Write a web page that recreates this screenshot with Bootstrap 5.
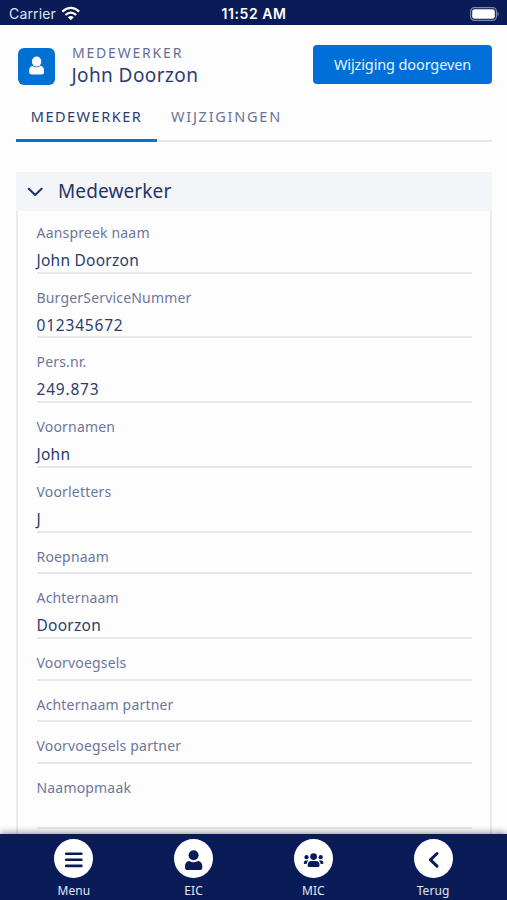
<!DOCTYPE html>
<html lang="nl">
<head>
<meta charset="utf-8">
<meta name="viewport" content="width=device-width, initial-scale=1">
<title>Medewerker</title>
<link href="https://cdn.jsdelivr.net/npm/bootstrap@5.3.0/dist/css/bootstrap.min.css" rel="stylesheet">
<style>
body{font-family:"Noto Sans",sans-serif;background:#fdfdfe;color:#2b3d6e;height:900px;overflow:hidden}
.screen{height:900px}
.statusbar{height:25px;background:#0a1c57;color:#fff;font-family:Inter,sans-serif;font-size:14px;line-height:25px;padding:2px 8px 0 9px}
.statusbar .side{flex:1 1 0}
.carrier{letter-spacing:.15px;color:#dfe4f2}
.clock{font-weight:600;font-size:14px;letter-spacing:.55px}
.record{height:72px;padding:18px 15px 0 18px}
.avatar{width:37px;height:37px;border-radius:6px;background:#0070d2;margin-top:5px}
.record-text{margin-left:17px}
.record-type{font-size:14px;line-height:20px;letter-spacing:1.8px;color:#666f98}
.record-name{font-size:19px;line-height:24px;letter-spacing:.4px;margin-left:-.5px}
.btn-change,.btn-change:hover{width:179px;height:39px;border-radius:4px;background:#0070d8;color:#e8f3ff;font-size:14.5px;padding:0;margin-top:2px;letter-spacing:-.12px}
.tabs{margin:0 15px 0 16px;height:45px;border-bottom:2px solid #e6e9ea}
.tabs .nav-link{height:45px;padding:0 0 6px;border-bottom:3px solid transparent;border-radius:0;font-size:14.5px;line-height:38px;letter-spacing:1.75px;color:#6b7397}
.tabs .nav-link.active{color:#2b3d6e;border-color:#1170c8;width:141px;letter-spacing:1.5px}
.tabs .tab-second{margin-left:14px}
.section-head{margin:30px 15px 0 16px;height:39px;background:#f4f5f9;color:#1f3566;font-size:19px;letter-spacing:.12px;padding-left:11px}
.section-title{margin-left:15px}
.fields{margin:0 15px 0 16px;border:solid #e8eaed;border-width:0 2px;padding:0 18px 0 18.5px;min-height:0}
.field{height:64.75px;padding-top:14.2px;border-bottom:2px solid #e5e7eb;flex:none}
.field:first-child{height:62.5px;padding-top:12px}
.field.blank{height:41.65px}
.field dt{font-weight:400;font-size:14px;line-height:20px;letter-spacing:.18px;color:#6d769c}
.field dd{margin:0;font-size:15.5px;line-height:22px;padding-top:6px;letter-spacing:.25px}
.field dd.digits{letter-spacing:.8px}
.dock{height:66px;background:#0a1c57;color:#e2e7f3;box-shadow:0 -1px 7px rgba(0,0,0,.45);padding:5px 14px 0;position:relative}
.dock a{width:119.75px;color:inherit;font-size:12px;line-height:16px;letter-spacing:.1px}
.disc{width:39px;height:39px;background:#fff;margin-bottom:5px}
</style>
</head>
<body>
<div class="screen d-flex flex-column">
  <div class="statusbar d-flex align-items-center flex-shrink-0">
    <div class="side d-flex align-items-center"><span class="carrier">Carrier</span>
      <svg class="ms-1" width="20" height="15" viewBox="0 0 20 15" fill="none" stroke="#fff" stroke-width="2.3"><path d="M2.3 5.7Q11-1.9 19.1 5.7M5.4 9Q10.8 4.2 16.2 9"/><path d="M10.8 14.2 7.8 11.2Q10.8 8.8 13.8 11.2Z" fill="#fff" stroke="none"/></svg>
    </div>
    <span class="clock">11:52 AM</span>
    <div class="side d-flex justify-content-end align-items-center">
      <svg width="29" height="14" viewBox="0 0 29 14"><rect x=".6" y=".6" width="25.8" height="12.8" rx="3.8" fill="none" stroke="#7f88ad" stroke-width="1.2"/><rect x="2.2" y="2.2" width="22.6" height="9.6" rx="2.4" fill="#fff"/><path d="M27.5 4.6Q30 7 27.5 9.4Z" fill="#7f88ad"/></svg>
    </div>
  </div>
  <header class="record d-flex align-items-start flex-shrink-0">
    <div class="avatar d-flex justify-content-center">
      <svg width="37" height="37" viewBox="0 0 37 37" fill="#fff"><ellipse cx="18.6" cy="13.6" rx="4.7" ry="5"/><path d="M14.3 17.8Q18.6 20.8 22.9 17.8Q26 19 26 22.5V24Q26 26.5 23.5 26.5H13.6Q11.2 26.5 11.2 24V22.5Q11.2 19 14.3 17.8Z"/></svg>
    </div>
    <div class="record-text flex-grow-1"><div class="record-type">MEDEWERKER</div><div class="record-name">John Doorzon</div></div>
    <button class="btn btn-change" type="button">Wijziging doorgeven</button>
  </header>
  <nav class="tabs nav flex-shrink-0">
    <a class="nav-link active text-center" href="#">MEDEWERKER</a>
    <a class="nav-link tab-second" href="#">WIJZIGINGEN</a>
  </nav>
  <div class="section-head d-flex align-items-center flex-shrink-0">
    <svg width="16" height="10" viewBox="0 0 16 10" fill="none" stroke="#1f3566" stroke-width="2.1" stroke-linecap="round" stroke-linejoin="round"><path d="M1.8 1.8 8.2 8 14.6 1.8"/></svg>
    <span class="section-title">Medewerker</span>
  </div>
  <dl class="fields d-flex flex-column flex-grow-1 overflow-hidden">
    <div class="field"><dt>Aanspreek naam</dt><dd>John Doorzon</dd></div>
    <div class="field"><dt>BurgerServiceNummer</dt><dd class="digits">012345672</dd></div>
    <div class="field"><dt>Pers.nr.</dt><dd class="digits">249.873</dd></div>
    <div class="field"><dt>Voornamen</dt><dd>John</dd></div>
    <div class="field"><dt>Voorletters</dt><dd>J</dd></div>
    <div class="field blank"><dt>Roepnaam</dt></div>
    <div class="field"><dt>Achternaam</dt><dd>Doorzon</dd></div>
    <div class="field blank"><dt>Voorvoegsels</dt></div>
    <div class="field blank"><dt>Achternaam partner</dt></div>
    <div class="field blank"><dt>Voorvoegsels partner</dt></div>
    <div class="field"><dt>Naamopmaak</dt></div>
  </dl>
  <nav class="dock d-flex flex-shrink-0">
    <a class="d-flex flex-column align-items-center text-decoration-none" href="#"><span class="disc rounded-circle"><svg width="39" height="39" viewBox="0 0 39 39" stroke="#0a1c57" stroke-width="2.6" stroke-linecap="round"><path d="M12.2 14.7H27.4M12.2 20.7H27.4M12.2 26.9H27.4"/></svg></span>Menu</a>
    <a class="d-flex flex-column align-items-center text-decoration-none" href="#"><span class="disc rounded-circle"><svg width="39" height="39" viewBox="0 0 39 39" fill="#0a1c57"><circle cx="19.6" cy="16.2" r="5"/><path d="M15.2 22.1Q19.6 24.6 24 22.1Q28.3 22.8 28.3 27.3V29Q28.3 31 26.3 31H13Q11 31 11 29V27.3Q11 22.8 15.2 22.1Z"/></svg></span>EIC</a>
    <a class="d-flex flex-column align-items-center text-decoration-none" href="#"><span class="disc rounded-circle"><svg width="39" height="39" viewBox="0 0 39 39" fill="#0a1c57"><circle cx="19.6" cy="17.6" r="3.4"/><circle cx="12.5" cy="18.2" r="2.1"/><circle cx="26.7" cy="18.2" r="2.1"/><path d="M16.8 22.1H22.4Q25.5 22.7 25.5 26V26.5Q25.5 28 24 28H15.2Q13.7 28 13.7 26.5V26Q13.7 22.7 16.8 22.1ZM11.3 21.5H14.4Q12.9 22.9 12.5 25.1H11Q9.7 25.1 9.7 24Q9.7 22.2 11.3 21.5ZM27.9 21.5H24.8Q26.3 22.9 26.7 25.1H28.2Q29.5 25.1 29.5 24Q29.5 22.2 27.9 21.5Z"/></svg></span>MIC</a>
    <a class="d-flex flex-column align-items-center text-decoration-none" href="#"><span class="disc rounded-circle"><svg width="39" height="39" viewBox="0 0 39 39" fill="none" stroke="#0a1c57" stroke-width="3" stroke-linecap="round" stroke-linejoin="round"><path d="M23 14.5 16.4 20.8 23 27.2"/></svg></span>Terug</a>
  </nav>
</div>
<script src="https://cdn.jsdelivr.net/npm/bootstrap@5.3.0/dist/js/bootstrap.bundle.min.js"></script>
</body>
</html>
